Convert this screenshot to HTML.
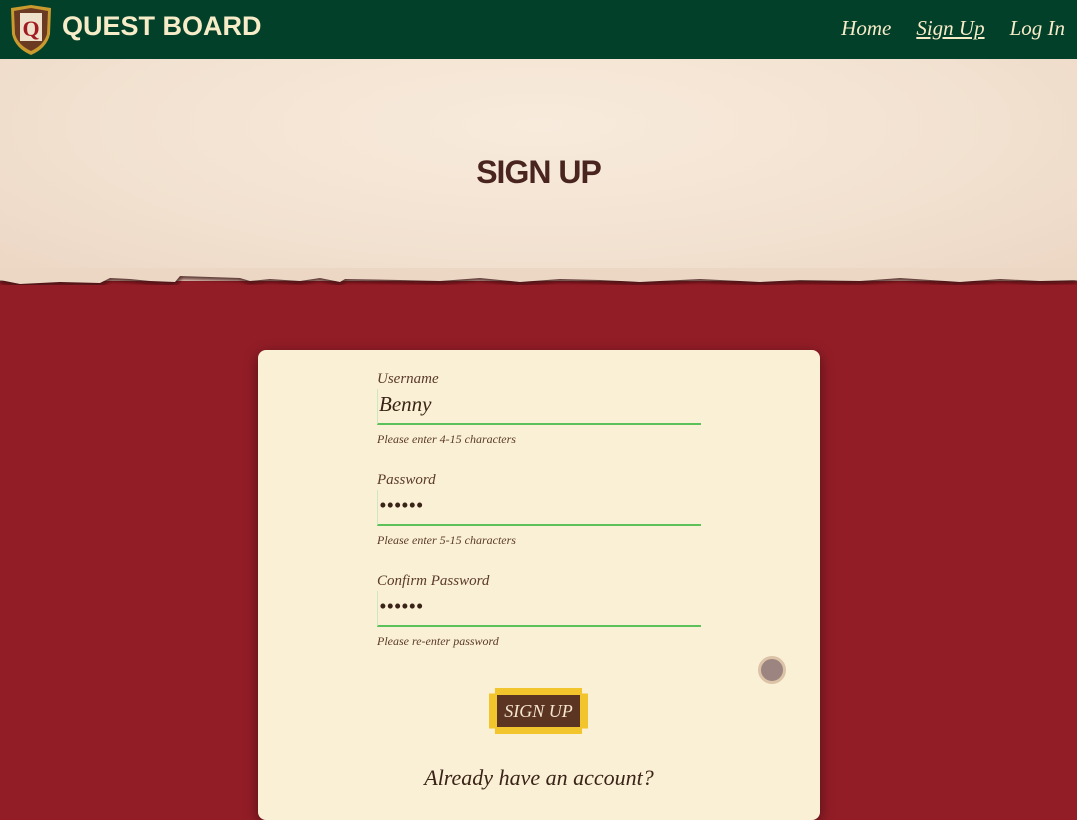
<!DOCTYPE html>
<html><head><style>
*{margin:0;padding:0;box-sizing:border-box}
body{width:1077px;height:804px;overflow:hidden;background:#931d27;font-family:"Liberation Serif",serif;position:relative}
.nav{position:absolute;top:0;left:0;width:1077px;height:59px;background:#03402a}
.logo{position:absolute;left:62px;top:11px;font-family:"Liberation Sans",sans-serif;font-weight:bold;font-size:27px;color:#f7ecc8;letter-spacing:0px}
.links{position:absolute;top:16px;right:12px;font-style:italic;font-size:21px;color:#f7ecc8}
.links span{margin-left:25px}
.hero{position:absolute;top:59px;left:0;width:1077px;height:222px;background:radial-gradient(ellipse at 50% 30%,#f8ebdc,#f2e1d0 60%,#ecd6c4)}
.edge{position:absolute;top:268px;left:0}
.title{position:absolute;top:154px;width:100%;text-align:center;font-family:"Liberation Sans",sans-serif;font-weight:bold;font-size:32px;color:#4a2520;letter-spacing:-1px}
.card{position:absolute;left:258px;top:350px;width:562px;height:470px;background:#faf0d5;border-radius:8px;box-shadow:0 4px 14px rgba(0,0,0,.45)}
.f{position:absolute;left:119px;width:324px;font-style:italic;color:#5a3a2a}
.lab{font-size:15px}
.val{font-size:21px;color:#3a2418;height:36px;line-height:30px;border-bottom:2px solid #5cc15a;border-left:1px solid #cde8c0;padding-left:1px;margin-top:1px}
.hint{font-size:12px;margin-top:7px}
.btn{position:absolute;left:231px;top:338px;width:99px;height:46px;background:#f2c52c;clip-path:polygon(6% 0,94% 0,94% 12%,100% 12%,100% 88%,94% 88%,94% 100%,6% 100%,6% 88%,0 88%,0 12%,6% 12%)}
.btn div{position:absolute;left:8px;top:7px;right:8px;bottom:7px;background:#5b3522;color:#f5e6d2;font-style:italic;font-size:18px;text-align:center;line-height:32px}
.dot{position:absolute;left:500px;top:306px;width:28px;height:28px;border-radius:50%;background:#9c8580;border:3px solid #dcc3a8}
.q{position:absolute;top:415px;width:100%;text-align:center;font-style:italic;font-size:22px;color:#3a2418}
</style></head><body>
<div class="nav">
<svg style="position:absolute;left:9px;top:4px" width="44" height="52" viewBox="0 0 44 52"><path d="M2 4 L22 1 L42 4 L41 30 Q38 44 22 51 Q6 44 3 30Z" fill="#c99a2e"/><path d="M5 7 L22 4 L39 7 L38 30 Q35 41 22 47 Q9 41 6 30Z" fill="#6b3a22"/><rect x="11" y="9" width="22" height="28" fill="#efe2cc"/><text x="22" y="32" font-size="22" font-weight="bold" fill="#a01c22" text-anchor="middle" font-family="Liberation Serif">Q</text></svg>
<div class="logo">QUEST BOARD</div>
<div class="links"><span>Home</span><span style="text-decoration:underline">Sign Up</span><span>Log In</span></div>
</div>
<div class="hero"></div>
<svg class="edge" width="1077" height="24" viewBox="0 0 1077 24"><defs><filter id="s"><feGaussianBlur stdDeviation="2"/></filter></defs><path d="M0 12 L20 16 L60 14 L100 15 L110 10 L130 11 L150 13 L175 14 L180 8 L240 10 L250 13 L270 11 L300 13 L320 10 L340 14 L345 11 L400 12 L440 13 L480 10 L520 14 L560 11 L600 12 L640 14 L700 11 L760 14 L800 12 L860 13 L900 10 L960 14 L1000 11 L1040 13 L1077 12" fill="none" stroke="#3a0a0e" stroke-width="5" filter="url(#s)"/><path d="M0 12 L20 16 L60 14 L100 15 L110 10 L130 11 L150 13 L175 14 L180 8 L240 10 L250 13 L270 11 L300 13 L320 10 L340 14 L345 11 L400 12 L440 13 L480 10 L520 14 L560 11 L600 12 L640 14 L700 11 L760 14 L800 12 L860 13 L900 10 L960 14 L1000 11 L1040 13 L1077 12 L1077 0 L0 0Z" fill="#ecd6c4"/></svg>
<div class="title">SIGN UP</div>
<div class="card">
<div class="f" style="top:21px"><div class="lab">Username</div><div class="val">Benny</div><div class="hint">Please enter 4-15 characters</div></div>
<div class="f" style="top:122px"><div class="lab">Password</div><div class="val">••••••</div><div class="hint">Please enter 5-15 characters</div></div>
<div class="f" style="top:223px"><div class="lab">Confirm Password</div><div class="val">••••••</div><div class="hint">Please re-enter password</div></div>
<div class="dot"></div>
<div class="btn"><div>SIGN UP</div></div>
<div class="q">Already have an account?</div>
</div>
</body></html>
